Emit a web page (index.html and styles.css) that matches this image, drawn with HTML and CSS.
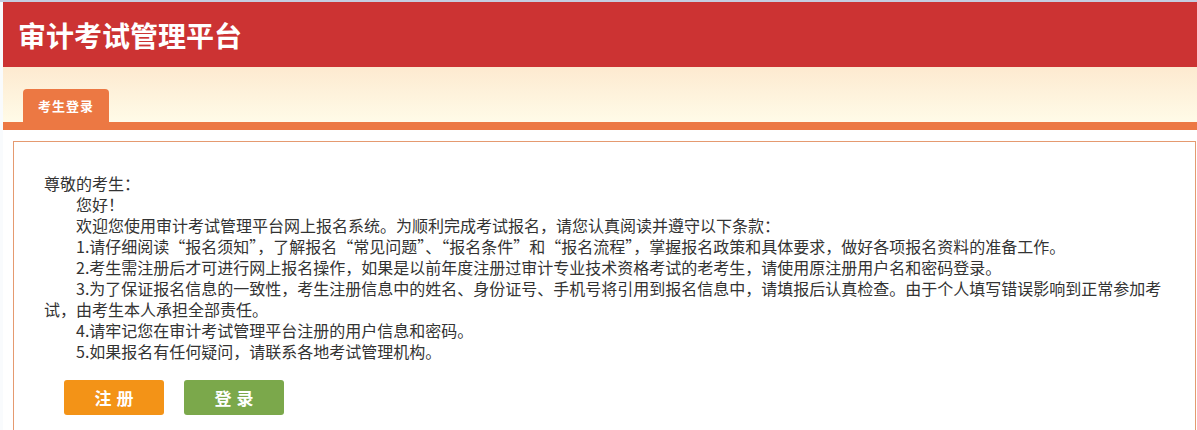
FILE: index.html
```html
<!DOCTYPE html>
<html lang="zh-CN">
<head>
<meta charset="utf-8">
<title>审计考试管理平台</title>
<link rel="stylesheet" href="styles.css">
</head>
<body>
<div class="page">
  <header class="header">
    <h1 class="title">审计考试管理平台</h1>
  </header>
  <nav class="nav">
    <div class="tab">考生登录</div>
  </nav>
  <div class="bar"></div>
  <main class="main">
    <section class="box">
      <div class="notice">
        <p class="greet">尊敬的考生：</p>
        <p class="para">您好！</p>
        <p class="para">欢迎您使用审计考试管理平台网上报名系统。为顺利完成考试报名，请您认真阅读并遵守以下条款：</p>
        <p class="para">1.请仔细阅读“报名须知”，了解报名“常见问题”、“报名条件”和“报名流程”，掌握报名政策和具体要求，做好各项报名资料的准备工作。</p>
        <p class="para">2.考生需注册后才可进行网上报名操作，如果是以前年度注册过审计专业技术资格考试的老考生，请使用原注册用户名和密码登录。</p>
        <p class="para">3.为了保证报名信息的一致性，考生注册信息中的姓名、身份证号、手机号将引用到报名信息中，请填报后认真检查。由于个人填写错误影响到正常参加考试，由考生本人承担全部责任。</p>
        <p class="para">4.请牢记您在审计考试管理平台注册的用户信息和密码。</p>
        <p class="para">5.如果报名有任何疑问，请联系各地考试管理机构。</p>
      </div>
      <div class="actions">
        <button class="btn btn-reg">注 册</button>
        <button class="btn btn-login">登 录</button>
      </div>
    </section>
  </main>
</div>
</body>
</html>
```

FILE: styles.css
```css
html, body {
  margin: 0;
  padding: 0;
  background: #ffffff;
}
body {
  font-family: "Noto Sans CJK SC", "Noto Sans", sans-serif;
  color: #333333;
  height: 430px;
  overflow: hidden;
}
.page {
  border-top: 2px solid #c5cde0;
  padding-left: 3px;
  background: #f9fbfd;
  min-height: 428px;
}
.header {
  height: 65px;
  background: #cc3333;
  display: flex;
  align-items: center;
  padding-left: 15px;
}
.title {
  margin: 0;
  color: #ffffff;
  font-size: 28px;
  font-weight: bold;
  line-height: 1;
}
.nav {
  height: 55px;
  background: linear-gradient(#fdead0, #fffbe8);
  display: flex;
  align-items: flex-end;
  padding-left: 20px;
}
.tab {
  width: 86px;
  height: 33px;
  background: #ec7843;
  border-radius: 4px 4px 0 0;
  color: #ffffff;
  font-size: 13px;
  font-weight: bold;
  display: flex;
  align-items: center;
  justify-content: center;
  letter-spacing: 1px;
  padding-bottom: 1px;
  box-sizing: border-box;
}
.bar {
  height: 8px;
  background: #ec7843;
}
.main {
  background: #ffffff;
  padding: 11px 1px 0 10px;
}
.box {
  border: 1px solid #e59a70;
  background: #ffffff;
  padding: 31px 30px 40px 30px;
  min-height: 300px;
}
.notice p {
  margin: 0;
  font-size: 16px;
  line-height: 21px;
}
.para {
  text-indent: 32px;
}
.actions {
  display: flex;
  gap: 20px;
  padding-left: 20px;
  margin-top: 18px;
}
.btn {
  width: 100px;
  height: 35px;
  border: none;
  border-radius: 3px;
  color: #ffffff;
  font-family: "Noto Sans CJK SC", sans-serif;
  font-size: 17px;
  font-weight: bold;
  letter-spacing: 0;
  word-spacing: 1px;
  padding: 0;
}
.btn-reg {
  background: #f39317;
}
.btn-login {
  background: #7ba84b;
}
```
